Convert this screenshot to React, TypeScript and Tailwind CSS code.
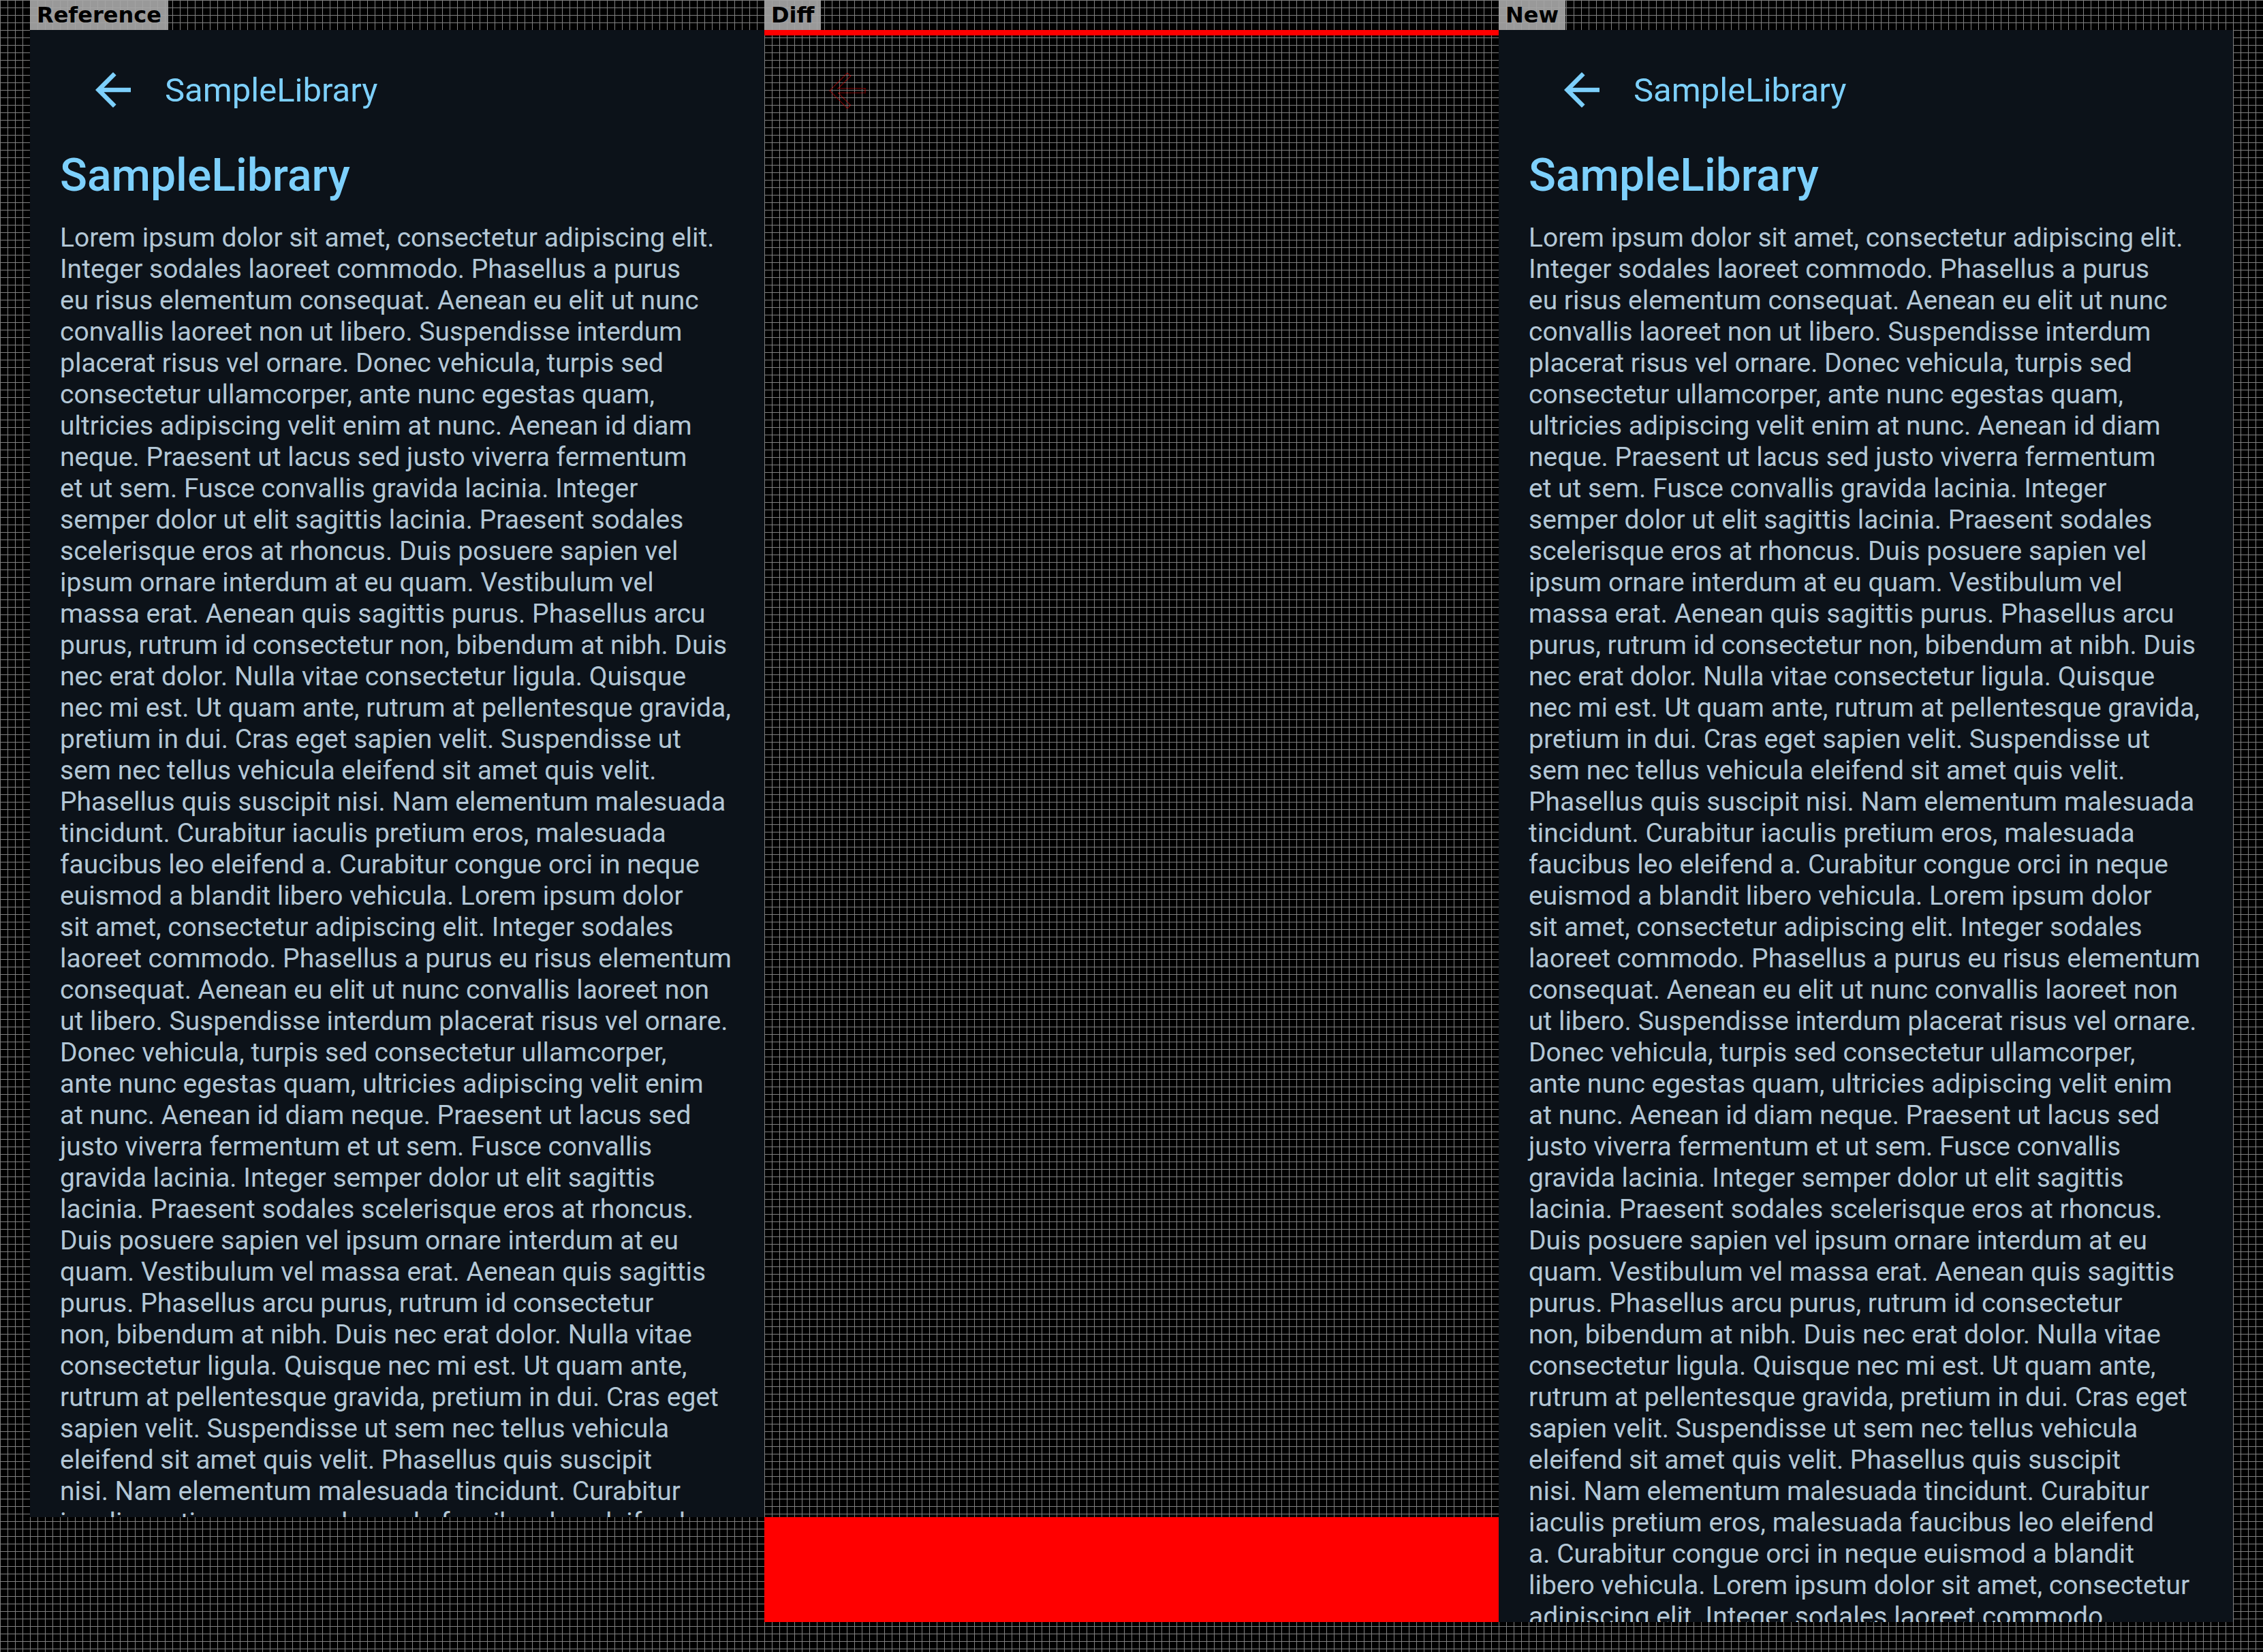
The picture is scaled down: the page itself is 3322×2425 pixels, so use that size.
import React from "react";

const LINES = [
  "Lorem ipsum dolor sit amet, consectetur adipiscing elit.",
  "Integer sodales laoreet commodo. Phasellus a purus",
  "eu risus elementum consequat. Aenean eu elit ut nunc",
  "convallis laoreet non ut libero. Suspendisse interdum",
  "placerat risus vel ornare. Donec vehicula, turpis sed",
  "consectetur ullamcorper, ante nunc egestas quam,",
  "ultricies adipiscing velit enim at nunc. Aenean id diam",
  "neque. Praesent ut lacus sed justo viverra fermentum",
  "et ut sem. Fusce convallis gravida lacinia. Integer",
  "semper dolor ut elit sagittis lacinia. Praesent sodales",
  "scelerisque eros at rhoncus. Duis posuere sapien vel",
  "ipsum ornare interdum at eu quam. Vestibulum vel",
  "massa erat. Aenean quis sagittis purus. Phasellus arcu",
  "purus, rutrum id consectetur non, bibendum at nibh. Duis",
  "nec erat dolor. Nulla vitae consectetur ligula. Quisque",
  "nec mi est. Ut quam ante, rutrum at pellentesque gravida,",
  "pretium in dui. Cras eget sapien velit. Suspendisse ut",
  "sem nec tellus vehicula eleifend sit amet quis velit.",
  "Phasellus quis suscipit nisi. Nam elementum malesuada",
  "tincidunt. Curabitur iaculis pretium eros, malesuada",
  "faucibus leo eleifend a. Curabitur congue orci in neque",
  "euismod a blandit libero vehicula. Lorem ipsum dolor",
  "sit amet, consectetur adipiscing elit. Integer sodales",
  "laoreet commodo. Phasellus a purus eu risus elementum",
  "consequat. Aenean eu elit ut nunc convallis laoreet non",
  "ut libero. Suspendisse interdum placerat risus vel ornare.",
  "Donec vehicula, turpis sed consectetur ullamcorper,",
  "ante nunc egestas quam, ultricies adipiscing velit enim",
  "at nunc. Aenean id diam neque. Praesent ut lacus sed",
  "justo viverra fermentum et ut sem. Fusce convallis",
  "gravida lacinia. Integer semper dolor ut elit sagittis",
  "lacinia. Praesent sodales scelerisque eros at rhoncus.",
  "Duis posuere sapien vel ipsum ornare interdum at eu",
  "quam. Vestibulum vel massa erat. Aenean quis sagittis",
  "purus. Phasellus arcu purus, rutrum id consectetur",
  "non, bibendum at nibh. Duis nec erat dolor. Nulla vitae",
  "consectetur ligula. Quisque nec mi est. Ut quam ante,",
  "rutrum at pellentesque gravida, pretium in dui. Cras eget",
  "sapien velit. Suspendisse ut sem nec tellus vehicula",
  "eleifend sit amet quis velit. Phasellus quis suscipit",
  "nisi. Nam elementum malesuada tincidunt. Curabitur",
  "iaculis pretium eros, malesuada faucibus leo eleifend",
  "a. Curabitur congue orci in neque euismod a blandit",
  "libero vehicula. Lorem ipsum dolor sit amet, consectetur",
  "adipiscing elit. Integer sodales laoreet commodo.",
];

const ARROW = "M20 11H7.83l5.59-5.59L12 4l-8 8 8 8 1.41-1.41L7.83 13H20v-2z";

const Label = ({ text }: { text: string }) => (
  <div className="h-[44px] self-start px-[10px] bg-[rgba(166,166,166,0.92)] text-[32px] leading-[44px] font-bold text-black font-['DejaVu_Sans',sans-serif]">
    {text}
  </div>
);

const Screen = ({ height }: { height: string }) => (
  <div className={`${height} w-[1078px] overflow-hidden bg-[#0c1219] font-['Roboto',sans-serif]`}>
    <div className="h-[176px] flex items-center pl-[83px] gap-[37px] text-[#7dd0fc]">
      <svg viewBox="0 0 24 24" className="w-[78px] h-[78px]" fill="currentColor">
        <path d={ARROW} />
      </svg>
      <span className="text-[49px] leading-[57px]">SampleLibrary</span>
    </div>
    <div className="px-[44px]">
      <h1 className="text-[66px] leading-[76px] font-medium text-[#7dd0fc]">SampleLibrary</h1>
      <div className="mt-[30px] text-[39px] leading-[46px] text-[#b3c7d6]">
        {LINES.map((line, i) => (
          <div key={i} className="whitespace-nowrap">
            {line}
          </div>
        ))}
      </div>
    </div>
  </div>
);

const App = () => {
  return (
    <div className="w-[3322px] h-[2425px] bg-black bg-[linear-gradient(to_right,#808080_1px,transparent_1px),linear-gradient(to_bottom,#808080_1px,transparent_1px)] [background-size:11px_11px] flex px-[44px]">
      <div className="flex flex-col">
        <Label text="Reference" />
        <Screen height="h-[2183px]" />
      </div>
      <div className="flex flex-col">
        <Label text="Diff" />
        <div className="h-[2337px] w-[1078px] flex flex-col">
          <div className="h-[8px] bg-[#ff0000]" />
          <div className="flex-1 pl-[83px] pt-[42px]">
            <svg viewBox="0 0 24 24" className="w-[78px] h-[78px]" fill="none">
              <path d={ARROW} stroke="#ff0000" strokeWidth="0.35" strokeDasharray="0.3 0.3" />
            </svg>
          </div>
          <div className="h-[154px] bg-[#ff0000]" />
        </div>
      </div>
      <div className="flex flex-col">
        <Label text="New" />
        <Screen height="h-[2337px]" />
      </div>
    </div>
  );
};

export default App;
